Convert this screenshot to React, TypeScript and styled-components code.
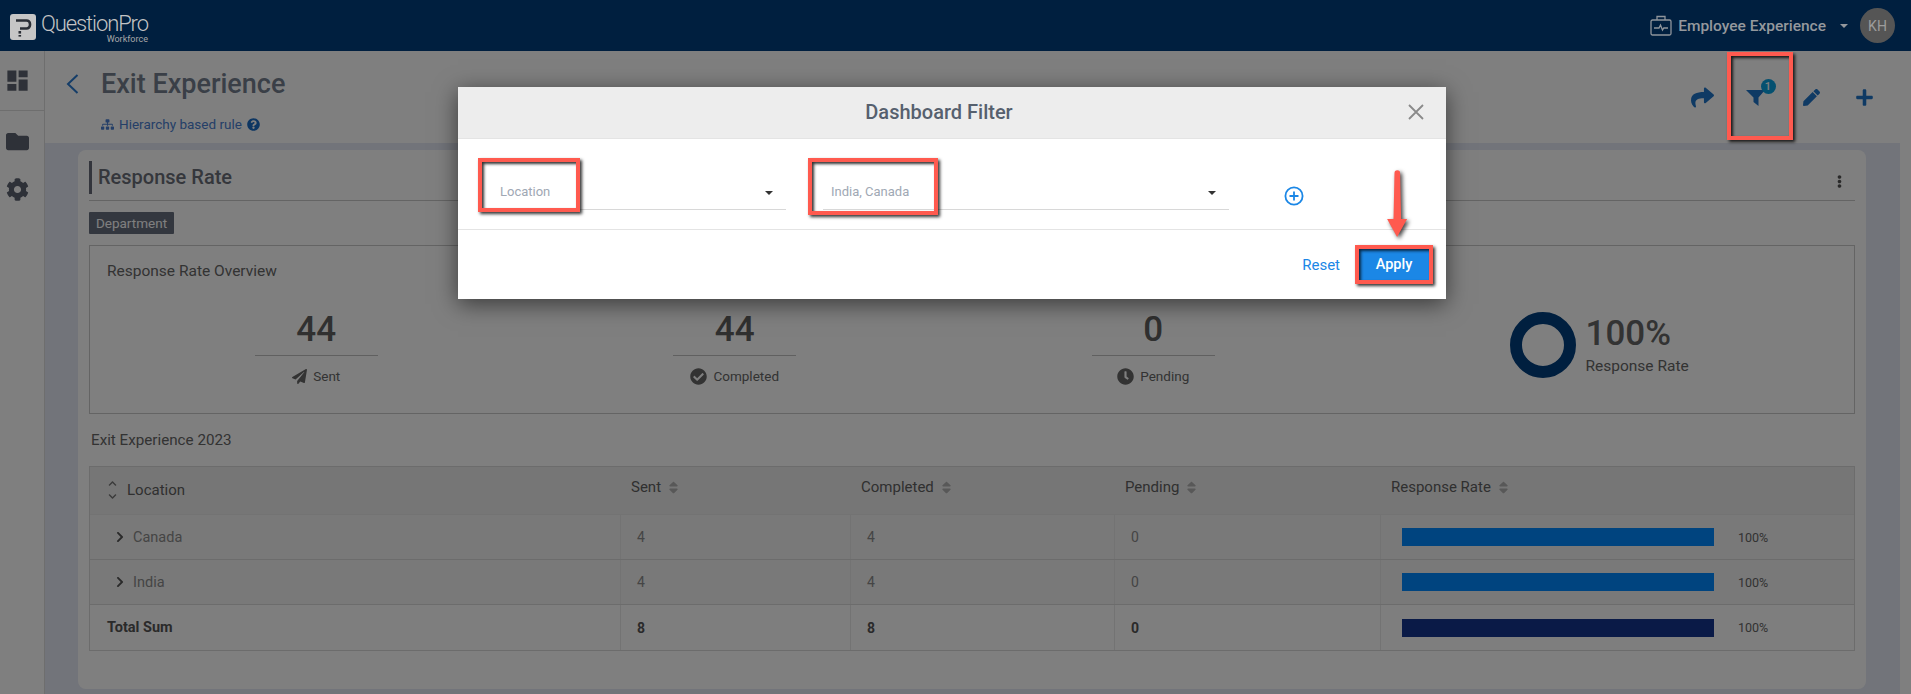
import styled, { createGlobalStyle } from 'styled-components';
import {
  FaShare,
  FaPen,
  FaPlus,
  FaFolder,
  FaCog,
  FaPaperPlane,
  FaCheckCircle,
  FaClock,
  FaSitemap,
  FaQuestionCircle,
  FaEllipsisV,
  FaSort,
  FaChevronRight,
  FaChevronUp,
  FaChevronDown,
} from 'react-icons/fa';
import { MdDashboard } from 'react-icons/md';

const font = `Roboto, "Noto Sans", sans-serif`;

const rows = [
  { name: 'Canada', sent: 4, completed: 4, pending: 0 },
  { name: 'India', sent: 4, completed: 4, pending: 0 },
];

function App() {
  return (
    <Page>
      <GlobalStyle />
      <TopBar>
        <Logo>
          <svg width="26" height="26" viewBox="0 0 26 26">
            <rect width="26" height="26" rx="3" fill="#c6c6c6" />
            <path
              d="M6 6.5h10.5a3.5 3.5 0 0 1 3.5 3.5v1a3.5 3.5 0 0 1-3.5 3.5H10"
              fill="none"
              stroke="#2b2f36"
              strokeWidth="2.6"
            />
            <rect x="8.5" y="17" width="2.6" height="2.6" fill="#2b2f36" />
            <rect x="8.5" y="21" width="2.6" height="1.6" fill="#2b2f36" />
          </svg>
          <LogoText>
            <LogoName>QuestionPro</LogoName>
            <LogoSub>Workforce</LogoSub>
          </LogoText>
        </Logo>
        <TopRight>
          <svg width="22" height="22" viewBox="0 0 22 22" fill="none" stroke="#8f959c" strokeWidth="1.3">
            <rect x="1" y="5" width="20" height="15" rx="1.5" />
            <path d="M7 5V1.5h8V5" />
            <path d="M4 13h5l1.5-3 2 5 1.3-2H18" />
          </svg>
          <Product>Employee Experience</Product>
          <Caret />
          <Avatar>KH</Avatar>
        </TopRight>
      </TopBar>
      <Body>
        <Sidebar>
          <SideItem $border>
            <MdDashboard size={27} />
          </SideItem>
          <SideItem>
            <FaFolder size={23} />
          </SideItem>
          <SideGear>
            <FaCog size={23} />
          </SideGear>
        </Sidebar>
        <Main>
          <PageHeader>
            <TitleBlock>
              <TitleRow>
                <BackIcon>
                  <svg width="13" height="20" viewBox="0 0 13 20" fill="none" stroke="#2a7ad0" strokeWidth="2">
                    <path d="M11.5 1L2 10l9.5 9" />
                  </svg>
                </BackIcon>
                <Title>Exit Experience</Title>
              </TitleRow>
              <RuleRow>
                <FaSitemap size={13} />
                <span>Hierarchy based rule</span>
                <FaQuestionCircle size={13} color="#1b6cc4" />
              </RuleRow>
            </TitleBlock>
            <Actions>
              <Action>
                <FaShare size={23} />
              </Action>
              <Action>
                <FilterIcon>
                  <svg width="22" height="22" viewBox="0 0 22 22">
                    <path d="M0 4h19l-6.5 7.5V20l-5-4v-4.5z" fill="#1f74c8" />
                  </svg>
                  <Badge>1</Badge>
                </FilterIcon>
              </Action>
              <Action $width={52}>
                <FaPen size={17} />
              </Action>
              <Action>
                <FaPlus size={19} />
              </Action>
            </Actions>
          </PageHeader>
          <Content>
            <Card>
              <CardHead>
                <CardTitle>Response Rate</CardTitle>
                <FaEllipsisV size={13} color="#555" />
              </CardHead>
              <Tag>Department</Tag>
              <Overview>
                <OverviewTitle>Response Rate Overview</OverviewTitle>
                <StatRow>
                  <Stat>
                    <StatValue>44</StatValue>
                    <StatLabel>
                      <FaPaperPlane size={15} />
                      Sent
                    </StatLabel>
                  </Stat>
                  <Stat>
                    <StatValue>44</StatValue>
                    <StatLabel>
                      <FaCheckCircle size={17} />
                      Completed
                    </StatLabel>
                  </Stat>
                  <Stat>
                    <StatValue>0</StatValue>
                    <StatLabel>
                      <FaClock size={17} />
                      Pending
                    </StatLabel>
                  </Stat>
                  <RateBlock>
                    <svg width="66" height="66" viewBox="0 0 66 66">
                      <circle cx="33" cy="33" r="27" fill="none" stroke="#003e7e" strokeWidth="12" />
                    </svg>
                    <div>
                      <RateValue>100%</RateValue>
                      <RateLabel>Response Rate</RateLabel>
                    </div>
                  </RateBlock>
                </StatRow>
              </Overview>
              <SectionTitle>Exit Experience 2023</SectionTitle>
              <Table>
                <HeadRow>
                  <HeadCell>
                    <TreeSort>
                      <FaChevronUp size={9} />
                      <FaChevronDown size={9} />
                    </TreeSort>
                    Location
                  </HeadCell>
                  {['Sent', 'Completed', 'Pending', 'Response Rate'].map((label) => (
                    <HeadCell key={label} $top>
                      {label}
                      <FaSort size={15} color="#b0b0b0" />
                    </HeadCell>
                  ))}
                </HeadRow>
                {rows.map((row) => (
                  <BodyRow key={row.name}>
                    <NameCell>
                      <FaChevronRight size={12} color="#555" />
                      {row.name}
                    </NameCell>
                    <Cell>{row.sent}</Cell>
                    <Cell>{row.completed}</Cell>
                    <Cell>{row.pending}</Cell>
                    <BarCell>
                      <Bar />
                      <BarText>100%</BarText>
                    </BarCell>
                  </BodyRow>
                ))}
                <TotalRow>
                  <TotalName>Total Sum</TotalName>
                  <Cell>8</Cell>
                  <Cell>8</Cell>
                  <Cell>0</Cell>
                  <BarCell>
                    <Bar $total />
                    <BarText>100%</BarText>
                  </BarCell>
                </TotalRow>
              </Table>
            </Card>
          </Content>
        </Main>
        <Overlay>
          <FilterMark />
          <Modal>
            <ModalHead>
              <ModalTitle>Dashboard Filter</ModalTitle>
              <CloseIcon viewBox="0 0 16 16">
                <path d="M1 1l14 14M15 1L1 15" stroke="#8a8a8a" strokeWidth="1.8" />
              </CloseIcon>
            </ModalHead>
            <Fields>
              <Field $width={306} $pad={20}>
                <FieldText>Location</FieldText>
                <FieldCaret />
                <FieldMark $width={102} $height={54} $left={-2} />
              </Field>
              <Field $width={406} $pad={8}>
                <FieldText>India, Canada</FieldText>
                <FieldCaret />
                <FieldMark $width={130} $height={57} $left={-15} />
              </Field>
              <AddIcon viewBox="0 0 20 20">
                <circle cx="10" cy="10" r="8.6" fill="none" stroke="#1b87e6" strokeWidth="1.8" />
                <path d="M10 5.5v9M5.5 10h9" stroke="#1b87e6" strokeWidth="1.8" />
              </AddIcon>
            </Fields>
            <ModalFoot>
              <Reset>Reset</Reset>
              <Apply>Apply</Apply>
            </ModalFoot>
            <Arrow viewBox="0 0 24 70" width="24" height="70">
              <path
                d="M9.5 3a2.8 2.8 0 0 1 5.6 0l1 46 6 0-10 18-10-18 6.4 0z"
                fill="#ff5a4f"
              />
            </Arrow>
          </Modal>
        </Overlay>
      </Body>
    </Page>
  );
}

export default App;

const GlobalStyle = createGlobalStyle`
  html, body {
    margin: 0;
    padding: 0;
    overflow: hidden;
  }
  * {
    box-sizing: border-box;
  }
`;

const Page = styled.div`
  width: 1911px;
  height: 694px;
  overflow: hidden;
  display: flex;
  flex-direction: column;
  font-family: ${font};
`;

const TopBar = styled.div`
  height: 51px;
  flex: none;
  background: #001f3f;
  display: flex;
  align-items: center;
  justify-content: space-between;
  padding: 0 16px 0 10px;
`;

const Logo = styled.div`
  display: flex;
  align-items: center;
  gap: 5px;
  margin-top: 3px;
`;

const LogoText = styled.div`
  display: flex;
  flex-direction: column;
  align-items: flex-end;
`;

const LogoName = styled.div`
  font-size: 22px;
  font-weight: 300;
  line-height: 23px;
  letter-spacing: -1.1px;
  color: #c4c4c4;
`;

const LogoSub = styled.div`
  font-size: 9px;
  line-height: 8px;
  color: #a8a8a8;
`;

const TopRight = styled.div`
  display: flex;
  align-items: center;
`;

const Product = styled.div`
  margin-left: 6px;
  font-size: 15.5px;
  font-weight: 500;
  color: #94989d;
`;

const Caret = styled.div`
  margin: 0 12px 0 14px;
  border-left: 4px solid transparent;
  border-right: 4px solid transparent;
  border-top: 4px solid #94989d;
`;

const Avatar = styled.div`
  width: 35px;
  height: 35px;
  border-radius: 50%;
  background: #555;
  color: #9c9c9c;
  font-size: 14px;
  display: flex;
  align-items: center;
  justify-content: center;
`;

const Body = styled.div`
  flex: 1;
  position: relative;
  display: flex;
  min-height: 0;
`;

const Sidebar = styled.div`
  width: 45px;
  flex: none;
  background: #fff;
  border-right: 1px solid #dcdcdc;
  color: #5c6270;
`;

const SideItem = styled.div<{ $border?: boolean }>`
  height: 60px;
  display: flex;
  align-items: center;
  justify-content: center;
  padding-right: 9px;
  padding-top: ${({ $border }) => ($border ? '0' : '1px')};
  border-bottom: ${({ $border }) => ($border ? '1px solid #dcdcdc' : 'none')};
`;

const SideGear = styled(SideItem)`
  height: 36px;
`;

const Main = styled.div`
  flex: 1;
  min-width: 0;
  display: flex;
  flex-direction: column;
  background: #fff;
`;

const PageHeader = styled.div`
  height: 92px;
  flex: none;
  display: flex;
  justify-content: space-between;
  padding: 16px 19px 0 21px;
`;

const TitleBlock = styled.div`
  display: flex;
  flex-direction: column;
`;

const TitleRow = styled.div`
  display: flex;
  align-items: center;
  height: 34px;
`;

const BackIcon = styled.div`
  width: 35px;
  display: flex;
`;

const Title = styled.div`
  font-size: 27px;
  font-weight: 500;
  color: #747e8e;
`;

const RuleRow = styled.div`
  display: flex;
  align-items: center;
  gap: 5px;
  margin: 15px 0 0 35px;
  font-size: 13.5px;
  color: #4a7fd0;
`;

const Actions = styled.div`
  display: flex;
  align-items: flex-start;
  color: #1f74c8;
  padding-top: 15px;
`;

const Action = styled.div<{ $width?: number }>`
  width: ${({ $width }) => $width ?? 55}px;
  height: 30px;
  display: flex;
  align-items: center;
  justify-content: center;
`;

const FilterIcon = styled.div`
  position: relative;
  width: 24px;
  height: 22px;
`;

const Badge = styled.div`
  position: absolute;
  top: -7px;
  right: -6px;
  width: 15px;
  height: 15px;
  border-radius: 50%;
  background: #08a0e0;
  color: #fff;
  font-size: 11px;
  font-weight: 500;
  line-height: 15px;
  text-align: center;
`;

const Content = styled.div`
  flex: 1;
  min-height: 0;
  background: #e4e8f4;
  margin-right: 11px;
  padding: 7px 34px 0 33px;
`;

const Card = styled.div`
  height: 539px;
  background: #fff;
  border-radius: 8px;
  padding: 11px 11px 0;
  color: #666;
`;

const CardHead = styled.div`
  height: 40px;
  display: flex;
  align-items: flex-start;
  justify-content: space-between;
  padding-right: 9px;
  border-bottom: 1px solid #c8c8c8;
  svg {
    margin-top: 14px;
  }
`;

const CardTitle = styled.div`
  height: 33px;
  border-left: 3px solid #666b78;
  padding-left: 6px;
  font-size: 20px;
  font-weight: 500;
  line-height: 32px;
  color: #6a6e78;
`;

const Tag = styled.div`
  width: 85px;
  height: 22px;
  margin-top: 11px;
  background: #666e7e;
  border-radius: 1px;
  color: #fff;
  font-size: 13.5px;
  line-height: 22px;
  text-align: center;
`;

const Overview = styled.div`
  height: 169px;
  margin-top: 11px;
  border: 1px solid #c8c8c8;
  padding: 15px 17px 0;
`;

const OverviewTitle = styled.div`
  font-size: 15.5px;
  line-height: 20px;
  color: #666;
`;

const StatRow = styled.div`
  display: grid;
  grid-template-columns: repeat(3, 418.5px) 1fr;
  margin-top: 31px;
`;

const Stat = styled.div`
  display: flex;
  flex-direction: column;
  align-items: center;
`;

const StatValue = styled.div`
  width: 123px;
  height: 44px;
  border-bottom: 1px solid #c0c0c0;
  text-align: center;
  font-size: 35px;
  font-weight: 500;
  line-height: 36px;
  color: #606060;
`;

const StatLabel = styled.div`
  display: flex;
  align-items: center;
  gap: 6px;
  margin-top: 11px;
  font-size: 13.5px;
  line-height: 18px;
  color: #666;
`;

const RateBlock = styled.div`
  display: flex;
  align-items: center;
  gap: 10px;
  padding-left: 147px;
  margin-top: -7px;
`;

const RateValue = styled.div`
  font-size: 35px;
  font-weight: 500;
  line-height: 38px;
  color: #666;
`;

const RateLabel = styled.div`
  margin-top: 4px;
  font-size: 15.5px;
  color: #666;
`;

const SectionTitle = styled.div`
  margin: 16px 0 0 2px;
  font-size: 15.2px;
  line-height: 20px;
  color: #666;
`;

const Table = styled.div`
  margin-top: 16px;
  border: 1px solid #d8d8d8;
`;

const Row = styled.div`
  display: grid;
  grid-template-columns: 530px 230px 264px 266px 1fr;
`;

const HeadRow = styled(Row)`
  height: 48px;
  background: #ededed;
  border-bottom: 1px solid #e6e6e6;
`;

const HeadCell = styled.div<{ $top?: boolean }>`
  display: flex;
  gap: ${({ $top }) => ($top ? '5px' : '10px')};
  align-items: ${({ $top }) => ($top ? 'flex-start' : 'center')};
  padding: ${({ $top }) => ($top ? '11px 0 0 11px' : '0 0 2px 18px')};
  font-size: 15px;
  line-height: 18px;
  color: #606060;
  svg {
    margin-top: ${({ $top }) => ($top ? '2px' : '0')};
  }
`;

const TreeSort = styled.div`
  display: flex;
  flex-direction: column;
  gap: 4px;
  color: #777;
`;

const BodyRow = styled(Row)`
  height: 45px;
  background: #f2f2f2;
  border-bottom: 1px solid #d8d8d8;
  color: #8a8a8a;
`;

const TotalRow = styled(Row)`
  height: 45px;
  background: #fcfcfc;
  color: #555;
  font-weight: 700;
`;

const Cell = styled.div`
  display: flex;
  align-items: center;
  padding-left: 16px;
  border-left: 1px solid #e6e6e6;
  font-size: 14px;
`;

const NameCell = styled.div`
  display: flex;
  align-items: center;
  gap: 7px;
  padding-left: 24px;
  font-size: 14.5px;
`;

const TotalName = styled.div`
  display: flex;
  align-items: center;
  padding-left: 17px;
  font-size: 14.5px;
`;

const BarCell = styled(Cell)`
  padding-left: 21px;
  gap: 24px;
  font-weight: 400;
`;

const Bar = styled.div<{ $total?: boolean }>`
  width: 312px;
  height: 18px;
  background: ${({ $total }) => ($total ? '#14348e' : '#0088ff')};
`;

const BarText = styled.div`
  font-size: 12.5px;
  color: #666;
`;

const Overlay = styled.div`
  position: absolute;
  inset: 0;
  background: rgba(0, 0, 0, 0.5);
`;

const markLine = `
  border: 4px solid #ff5a4f;
  box-shadow: 2px 2px 3px rgba(0, 0, 0, 0.8), inset 2px 2px 3px rgba(0, 0, 0, 0.8);
`;

const FilterMark = styled.div`
  position: absolute;
  left: 1727px;
  top: 1px;
  width: 66px;
  height: 88px;
  ${markLine}
`;

const Modal = styled.div`
  position: absolute;
  left: 458px;
  top: 36px;
  width: 988px;
  height: 212px;
  background: #fff;
  display: flex;
  flex-direction: column;
  box-shadow: 0 5px 22px rgba(0, 0, 0, 0.55);
`;

const ModalHead = styled.div`
  height: 52px;
  flex: none;
  background: #ededed;
  border-bottom: 1px solid #e4e4e4;
  display: flex;
  align-items: center;
  justify-content: center;
  padding: 0 26px 2px 0;
  position: relative;
`;

const ModalTitle = styled.div`
  font-size: 20px;
  font-weight: 500;
  color: #56606e;
`;

const CloseIcon = styled.svg`
  position: absolute;
  right: 22px;
  top: 17px;
  width: 16px;
  height: 16px;
`;

const Fields = styled.div`
  height: 91px;
  flex: none;
  border-bottom: 1px solid #e4e4e4;
  display: flex;
  align-items: flex-start;
  gap: 37px;
  padding: 39px 0 0 22px;
`;

const Field = styled.div<{ $width: number; $pad: number }>`
  position: relative;
  width: ${({ $width }) => $width}px;
  height: 32px;
  border-bottom: 1px solid #d8d8d8;
  display: flex;
  align-items: center;
  justify-content: space-between;
  padding: 0 13px 5px ${({ $pad }) => $pad}px;
`;

const FieldText = styled.div`
  font-size: 13px;
  color: #a0a8b4;
`;

const FieldCaret = styled.div`
  border-left: 4px solid transparent;
  border-right: 4px solid transparent;
  border-top: 4px solid #333;
  margin-top: 3px;
`;

const FieldMark = styled.div<{ $width: number; $height: number; $left: number }>`
  position: absolute;
  top: -20px;
  left: ${({ $left }) => $left}px;
  width: ${({ $width }) => $width}px;
  height: ${({ $height }) => $height}px;
  ${markLine}
`;

const AddIcon = styled.svg`
  width: 20px;
  height: 20px;
  margin: 8px 0 0 18px;
  flex: none;
`;

const ModalFoot = styled.div`
  flex: 1;
  display: flex;
  align-items: center;
  justify-content: flex-end;
  padding-right: 13px;
  gap: 15px;
`;

const Reset = styled.div`
  font-size: 15px;
  color: #1b87e6;
`;

const Apply = styled.div`
  width: 78px;
  height: 39px;
  background: #1b87e6;
  border: 4px solid #ff5a4f;
  box-shadow: 2px 2px 3px rgba(0, 0, 0, 0.8), inset 2px 2px 3px rgba(0, 0, 0, 0.7);
  color: #fff;
  font-size: 14.5px;
  font-weight: 500;
  text-align: center;
  line-height: 31px;
`;

const Arrow = styled.svg`
  position: absolute;
  left: 927px;
  top: 83px;
  filter: drop-shadow(2px 2px 2px rgba(0, 0, 0, 0.75));
`;
